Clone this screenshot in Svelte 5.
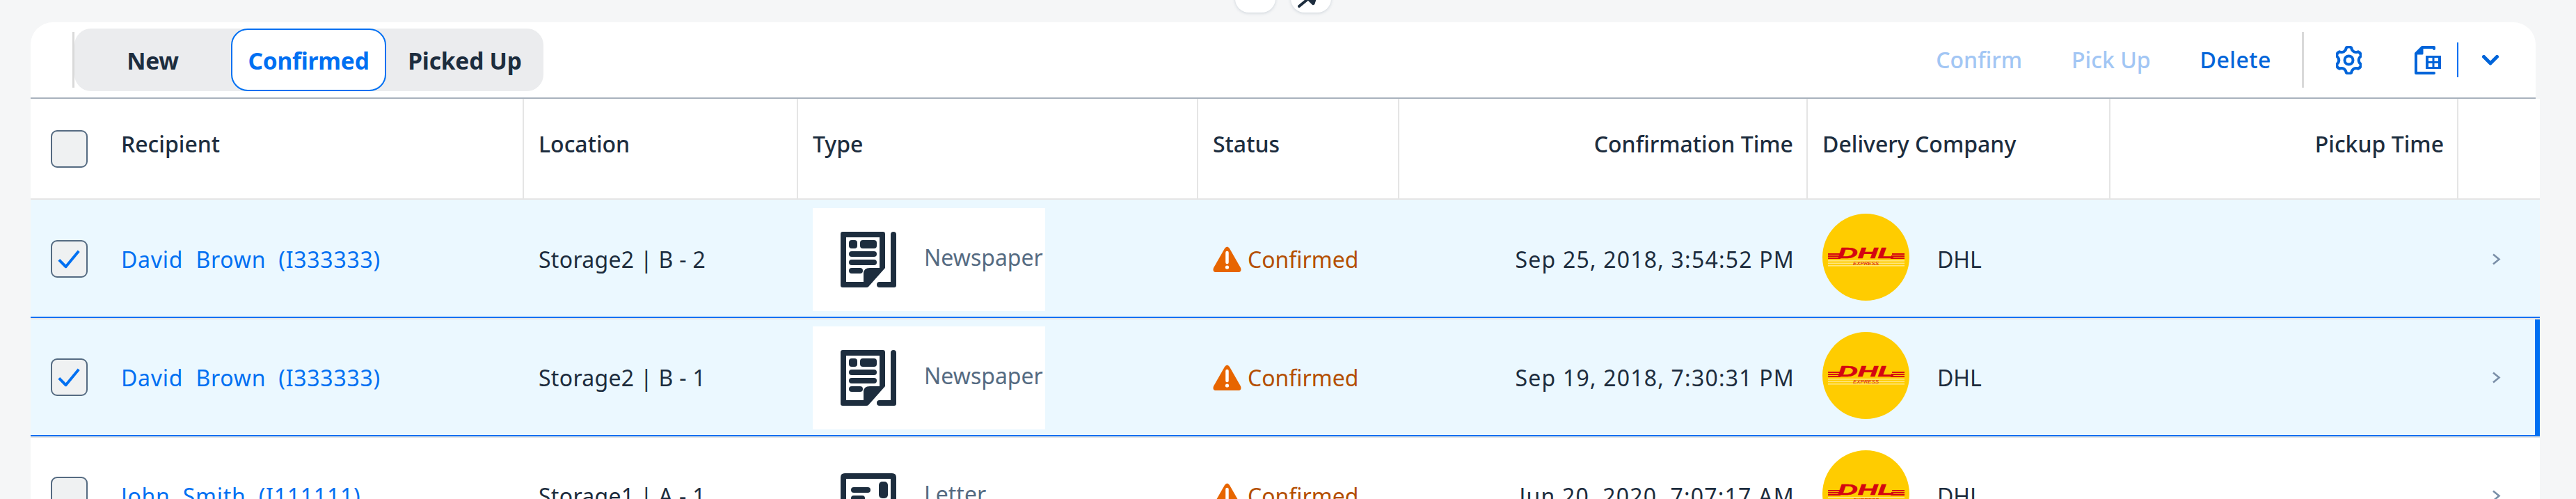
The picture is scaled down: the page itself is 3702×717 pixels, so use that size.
<script>
  const rows = [
    { name: 'David\u00a0 Brown\u00a0 (I333333)', loc: 'Storage2 | B - 2', type: 'Newspaper', time: 'Sep 25, 2018, 3:54:52 PM', sel: true, first: true },
    { name: 'David\u00a0 Brown\u00a0 (I333333)', loc: 'Storage2 | B - 1', type: 'Newspaper', time: 'Sep 19, 2018, 7:30:31 PM', sel: true, focus: true },
    { name: 'John\u00a0 Smith\u00a0 (I111111)', loc: 'Storage1 | A - 1', type: 'Letter', time: 'Jun 20, 2020, 7:07:17 AM', sel: false }
  ];
  const heads = [
    ['Recipient', ''], ['Location', ''], ['Type', ''], ['Status', ''],
    ['Confirmation Time', 'end'], ['Delivery Company', ''], ['Pickup Time', 'end'], ['', '']
  ];
  // Six-lobed gear outline
  let gear = '';
  for (let i = 0; i < 6; i++) {
    const a = (-90 + i * 60) * Math.PI / 180;
    const p = (r, d) => {
      const t = a + d * Math.PI / 180;
      return (18.5 + r * Math.cos(t)).toFixed(1) + ' ' + (20.5 + r * Math.sin(t)).toFixed(1);
    };
    gear += (i ? 'L' : 'M') + p(14.2, -30) + 'Q' + p(15, -15) + ' ' + p(18.2, -12) + 'Q' + p(20.6, 0) + ' ' + p(18.2, 12) + 'Q' + p(15, 15) + ' ' + p(14.2, 30);
  }
  gear += 'Z';
</script>

<div class="page">
  <div class="pills">
    <div class="pill"></div>
    <div class="pill">
      <svg class="pin" viewBox="0 0 30 12" aria-hidden="true"><path d="M2 9 L13 0" stroke="#1d2d3e" stroke-width="4" stroke-linecap="round" fill="none"/><path d="M12 -2 L21 7 Q24 8 25 4 L27 -2Z" fill="#1d2d3e"/></svg>
    </div>
  </div>
  <div class="card">
    <div class="toolbar">
      <span class="sep"></span>
      <div class="tabs">
        <div class="tab">New</div>
        <div class="tab active">Confirmed</div>
        <div class="tab">Picked Up</div>
      </div>
      <div class="actions">
        <span class="act off">Confirm</span>
        <span class="act off">Pick Up</span>
        <span class="act del">Delete</span>
        <span class="sep sep2"></span>
        <svg class="gear" viewBox="0 0 37 41" aria-hidden="true">
          <path d={gear} fill="none" stroke="#0064d9" stroke-width="4" stroke-linejoin="round"/>
          <circle cx="18.5" cy="20.5" r="6" fill="none" stroke="#0064d9" stroke-width="4"/>
        </svg>
        <svg class="export" viewBox="0 0 38 41" aria-hidden="true">
          <path d="M28 4 V2 H11 L2 11 V39 H28" fill="none" stroke="#0064d9" stroke-width="4" stroke-linecap="round" stroke-linejoin="round"/>
          <path d="M2 11 L11 2 V11Z" fill="#0064d9" stroke="#0064d9" stroke-width="3" stroke-linejoin="round"/>
          <path fill-rule="evenodd" d="M16 14 H38 V33 H16Z M20 17 V22 H25.5 V17Z M28.5 17 V22 H34 V17Z M20 25 V30 H25.5 V25Z M28.5 25 V30 H34 V25Z" fill="#0064d9"/>
        </svg>
        <span class="vline"></span>
        <svg class="chev" viewBox="0 0 24 15" aria-hidden="true"><path d="M2.5 2.5 L12 12 L21.5 2.5" fill="none" stroke="#0064d9" stroke-width="5" stroke-linecap="round" stroke-linejoin="round"/></svg>
      </div>
    </div>

    <div class="table">
      <div class="grid head">
        {#each heads as h, i}
          <div class="hcell" class:end={h[1] === 'end'}>
            {#if i === 0}<span class="box"></span>{/if}
            <span class="htext">{h[0]}</span>
          </div>
        {/each}
      </div>
      {#each rows as r}
        <div class="wrap" class:first={r.first} class:focus={r.focus}>
          <div class="grid row" class:sel={r.sel}>
            <div class="cell">
              <span class="box">
                {#if r.sel}
                  <svg viewBox="0 0 49 50" aria-hidden="true"><path d="M10 27 L20 37 L39 14" fill="none" stroke="#0070f2" stroke-width="4" stroke-linejoin="round"/></svg>
                {/if}
              </span>
              <span class="link">{r.name}</span>
            </div>
            <div class="cell loc">{r.loc}</div>
            <div class="cell">
              <div class="typebox">
                {#if r.type === 'Newspaper'}
                  <svg class="ticon" viewBox="0 0 80 80" aria-hidden="true">
                    <path fill-rule="evenodd" fill="#1d2d3e" d="M3 0 H61 Q64 0 64 3 V52 L40 79 Q39 80 37 80 H3 Q0 80 0 77 V3 Q0 0 3 0Z M8 8 V72 H33 V60 Q33 52 42 52 H56 V8Z"/>
                    <rect x="12" y="12" width="12" height="12" rx="4" fill="#1d2d3e"/>
                    <rect x="28" y="12" width="24" height="12" rx="4" fill="#1d2d3e"/>
                    <rect x="12" y="28" width="40" height="8" rx="4" fill="#1d2d3e"/>
                    <rect x="12" y="40" width="40" height="8" rx="4" fill="#1d2d3e"/>
                    <rect x="12" y="52" width="20" height="8" rx="4" fill="#1d2d3e"/>
                    <path d="M72 4 Q72 0 76 0 Q80 0 80 4 V77 Q80 80 77 80 H56 Q52 80 52 76 Q52 72 56 72 H72Z" fill="#1d2d3e"/>
                  </svg>
                {:else}
                  <svg class="ticon lettericon" viewBox="0 0 80 80" aria-hidden="true">
                    <path fill-rule="evenodd" fill="#1d2d3e" d="M6 0 H74 Q80 0 80 6 V74 Q80 80 74 80 H6 Q0 80 0 74 V6 Q0 0 6 0Z M8 8 V72 H72 V8Z"/>
                    <rect x="55" y="12" width="13" height="24" rx="5" fill="#1d2d3e"/>
                    <rect x="15" y="20" width="28" height="8" rx="4" fill="#1d2d3e"/>
                    <rect x="15" y="32" width="20" height="8" rx="4" fill="#1d2d3e"/>
                  </svg>
                {/if}
                <span class="ttext">{r.type}</span>
              </div>
            </div>
            <div class="cell status">
              <svg class="warn" viewBox="0 0 41 37" aria-hidden="true">
                <path d="M17 3 Q20.5 -2 24 3 L40 31 Q42 37 36 37 H5 Q-1 37 1 31Z" fill="#e76500"/>
                <path d="M20.5 9 V23" stroke="#fff" stroke-width="4.5" stroke-linecap="round"/>
                <circle cx="20.5" cy="30" r="2.6" fill="#fff"/>
              </svg>
              <span>Confirmed</span>
            </div>
            <div class="cell end time">{r.time}</div>
            <div class="cell">
              <svg class="dhl" viewBox="0 0 125 125" aria-hidden="true">
                <circle cx="62.5" cy="62.5" r="62.5" fill="#ffcc00"/>
                <g fill="#d40511">
                  <rect x="8" y="57" width="22" height="2"/><rect x="8" y="60" width="20" height="2"/><rect x="8" y="63" width="18" height="2"/>
                  <rect x="100" y="57" width="18" height="2"/><rect x="99" y="60" width="19" height="2"/><rect x="98" y="63" width="20" height="2"/>
                </g>
                <text class="dhlword" x="22" y="63.5" textLength="82" lengthAdjust="spacingAndGlyphs">DHL</text>
                <g fill="#ffe680">
                  <rect x="8" y="67" width="110" height="1.6"/><rect x="8" y="70.5" width="110" height="1.6"/><rect x="8" y="74" width="110" height="1.6"/>
                </g>
                <text class="dhlsub" x="44" y="74" textLength="37" lengthAdjust="spacingAndGlyphs">EXPRESS</text>
              </svg>
              <span class="dhltext">DHL</span>
            </div>
            <div class="cell"></div>
            <div class="cell chevcell">
              <svg class="rchev" viewBox="0 0 13 17" aria-hidden="true"><path d="M2 1.5 L10.5 8.5 L2 15.5" fill="none" stroke="#7a8fa8" stroke-width="2.6"/></svg>
            </div>
          </div>
        </div>
      {/each}
    </div>
  </div>
</div>

<style>
  :global(body) {
    margin: 0;
    background: #f5f6f7;
  }
  .page {
    position: relative;
    height: 717px;
    overflow: hidden;
    box-sizing: border-box;
    padding: 32px 0 0 44px;
    background: #f5f6f7;
    font-family: "Noto Sans", "Open Sans", sans-serif;
    font-size: 32px;
    color: #1d2d3e;
  }
  .pills {
    position: absolute;
    top: -30px;
    left: 1775px;
    display: flex;
    gap: 22px;
  }
  .pill {
    position: relative;
    width: 58px;
    height: 48px;
    background: #fff;
    border-radius: 20px;
    box-shadow: 0 1px 4px rgba(85, 107, 130, 0.25);
    overflow: hidden;
  }
  .pin {
    position: absolute;
    left: 10px;
    top: 30px;
    width: 30px;
    height: 12px;
  }
  .card {
    width: 3600px;
    background: #fff;
    border-radius: 32px 32px 0 0;
  }
  .toolbar {
    display: flex;
    align-items: center;
    box-sizing: border-box;
    height: 110px;
    padding-left: 60px;
    padding-right: 53px;
    border-bottom: 2px solid #a8b2bd;
  }
  .sep {
    width: 3px;
    height: 80px;
    background: #d9d9d9;
    flex: none;
  }
  .tabs {
    display: grid;
    grid-template-columns: 225px 223px 226px;
    height: 90px;
    background: #ebecee;
    border-radius: 24px;
  }
  .tab {
    display: flex;
    align-items: center;
    justify-content: center;
    font-size: 33.5px;
    font-weight: 700;
    padding-top: 2px;
    letter-spacing: -0.2px;
  }
  .active {
    background: #fff;
    color: #0070f2;
    border: 2px solid #0070f2;
    border-radius: 24px;
    box-sizing: border-box;
  }
  .actions {
    margin-left: auto;
    display: flex;
    align-items: center;
  }
  .act {
    font-weight: 500;
    color: #0064d9;
    margin-left: 71px;
    padding-bottom: 2px;
  }
  .off {
    color: #a2c6f4;
  }
  .del {
    letter-spacing: 0.5px;
  }
  .sep2 {
    margin-left: 44px;
  }
  .gear {
    width: 37px;
    height: 41px;
    margin-left: 46px;
  }
  .export {
    width: 38px;
    height: 41px;
    margin-left: 76px;
  }
  .vline {
    width: 2px;
    height: 50px;
    background: #0070f2;
    margin-left: 23px;
  }
  .chev {
    width: 24px;
    height: 15px;
    margin-left: 34px;
  }
  .table {
    width: 3606px;
  }
  .grid {
    display: grid;
    grid-template-columns: 709px 394px 575px 289px 587px 435px 500px 117px;
  }
  .head {
    height: 145px;
    border-bottom: 2px solid #e5e5e5;
    box-sizing: border-box;
    background: #fff;
  }
  .hcell {
    display: flex;
    align-items: center;
    box-sizing: border-box;
    padding: 0 21px;
    border-right: 2px solid #e5e5e5;
    font-weight: 500;
  }
  .hcell.end {
    padding-right: 19px;
  }
  .hcell:first-child {
    padding-left: 29px;
  }
  .hcell:last-child {
    border-right: 0;
  }
  .htext {
    padding-bottom: 14px;
  }
  .end {
    justify-content: flex-end;
  }
  .box {
    flex: none;
    display: block;
    box-sizing: border-box;
    width: 53px;
    height: 54px;
    background: #eff1f2;
    border: 2.5px solid #556b82;
    border-radius: 9px;
    margin-right: 48px;
  }
  .box svg {
    display: block;
    width: 48px;
    height: 49px;
  }
  .wrap {
    position: relative;
    border-bottom: 2px solid #e5e5e5;
    background: #fff;
  }
  .wrap.first {
    padding-top: 2px;
    background: #ebf8ff;
  }
  .wrap.focus::after {
    content: "";
    position: absolute;
    top: 0;
    right: 0;
    bottom: 2px;
    width: 7px;
    background: #0070f2;
  }
  .row {
    box-sizing: border-box;
    height: 168px;
    border-bottom: 2px solid transparent;
  }
  .row.sel {
    background: #ebf8ff;
    border-bottom-color: #0070f2;
  }
  .cell {
    display: flex;
    align-items: center;
    min-width: 0;
    box-sizing: border-box;
    padding: 0 21px;
    white-space: nowrap;
  }
  .cell:first-child {
    padding-left: 29px;
  }
  .link {
    color: #0070f2;
    letter-spacing: 0.75px;
  }
  .loc {
    letter-spacing: 0.3px;
  }
  .time {
    letter-spacing: 1.2px;
    padding-right: 19px;
  }
  .typebox {
    display: flex;
    align-items: center;
    width: 334px;
    height: 148px;
    background: #fff;
    overflow: hidden;
    flex: none;
    margin-top: 2px;
  }
  .ticon {
    flex: none;
    width: 80px;
    height: 80px;
    margin-left: 40px;
  }
  .lettericon {
    margin-top: 14px;
  }
  .ttext {
    margin-left: 40px;
    color: #556b82;
    padding-bottom: 8px;
  }
  .status {
    color: #b44f00;
  }
  .warn {
    flex: none;
    width: 41px;
    height: 37px;
    margin-right: 9px;
  }
  .dhl {
    flex: none;
    width: 125px;
    height: 125px;
    margin-bottom: 6px;
  }
  .dhlword {
    font-family: "Liberation Sans", sans-serif;
    font-size: 22px;
    font-weight: 700;
    font-style: italic;
    fill: #d40511;
    stroke: #d40511;
    stroke-width: 0.6px;
  }
  .dhlsub {
    font-family: "Liberation Sans", sans-serif;
    font-size: 7.5px;
    font-style: italic;
    fill: #d40511;
  }
  .dhltext {
    margin-left: 40px;
  }
  .chevcell {
    padding-left: 48px;
  }
  .rchev {
    width: 13px;
    height: 17px;
  }
</style>
